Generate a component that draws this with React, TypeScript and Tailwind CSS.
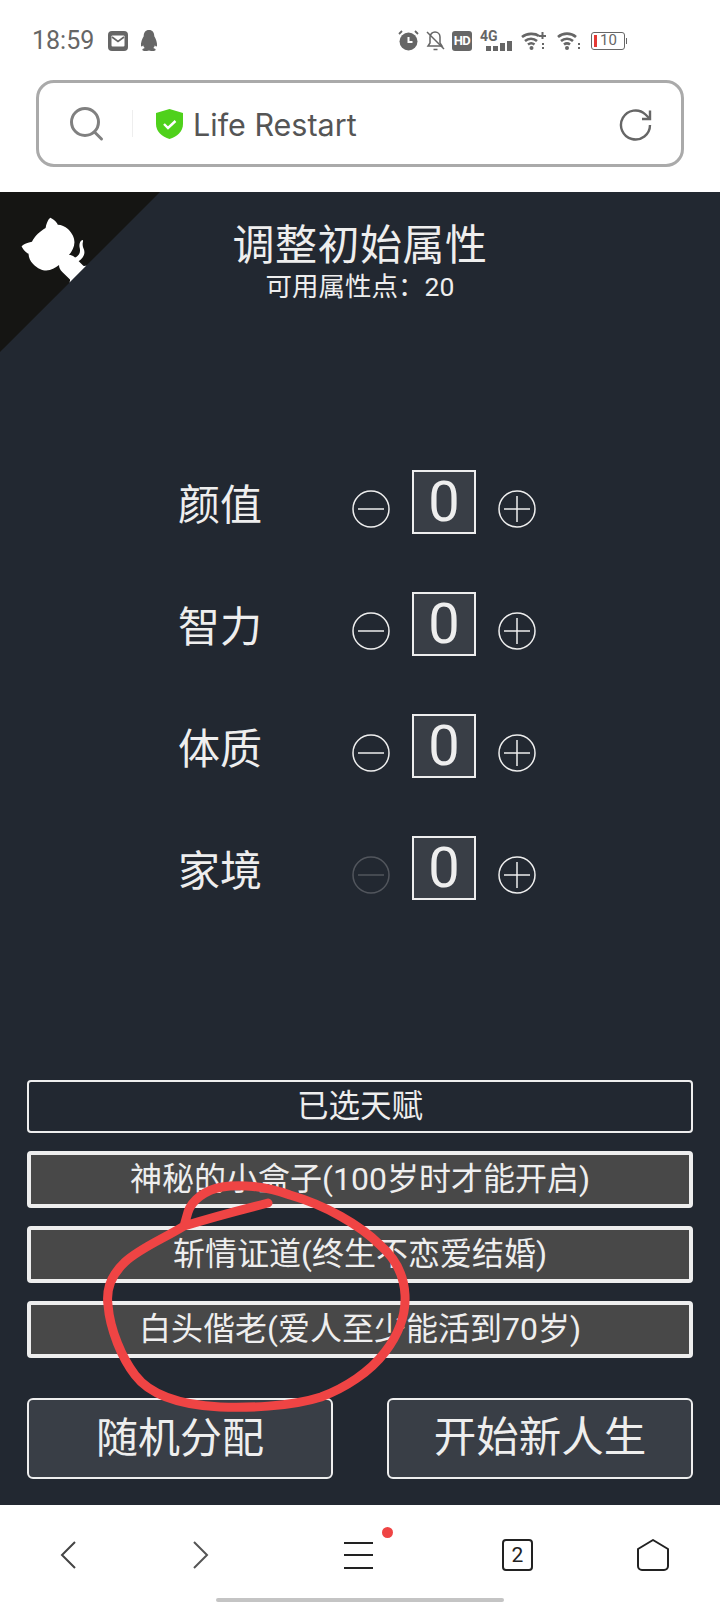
const CJK = '[font-family:Roboto,"Noto_Sans_CJK_SC",sans-serif]';

const stats = [
  { label: '颜值', canMinus: true },
  { label: '智力', canMinus: true },
  { label: '体质', canMinus: true },
  { label: '家境', canMinus: false },
];

const talents = ['神秘的小盒子(100岁时才能开启)', '斩情证道(终生不恋爱结婚)', '白头偕老(爱人至少能活到70岁)'];

function StatusBar() {
  return (
    <div className="flex h-[80px] items-start pl-[32px] pt-[27px] text-[#666]">
      <span className="w-[76px] text-[25px] leading-[28px] [font-family:Roboto,sans-serif]">18:59</span>
      {/* mail */}
      <svg width="20" height="20" viewBox="0 0 20 20" className="mt-[4px]">
        <rect width="20" height="20" rx="4" fill="#666" />
        <rect x="3.500" y="4.500" width="13" height="11" rx="1" fill="#fff" />
        <path d="M4 6l6 4.500L16 6" fill="none" stroke="#666" strokeWidth="1.600" />
      </svg>
      {/* qq */}
      <svg width="18" height="21" viewBox="0 0 18 21" className="ml-[12px] mt-[3px]" fill="#666">
        <path d="M9 0c3.600 0 5.300 2.700 5.300 6.200 1.400 2.500 3.200 6.500 2.700 9.800-.5 1-1.500.2-2.100-.8-.2 1.100-.8 2.100-1.600 2.800 1.400.5 2.600 1.100 2.400 2-.2 1-3 1-4.500 1-1 0-1.700-.4-2.200-.4s-1.200.4-2.200.4c-1.500 0-4.300 0-4.500-1-.2-.9 1-1.500 2.400-2-.8-.7-1.400-1.700-1.600-2.800-.6 1-1.600 1.800-2.100.8-.5-3.300 1.300-7.300 2.700-9.800C3.700 2.700 5.400 0 9 0z" />
      </svg>
      <div className="ml-auto mr-[93px] mt-[3px] flex items-center">
        {/* alarm */}
        <svg width="21" height="21" viewBox="0 0 21 21">
          <circle cx="10.500" cy="11.500" r="9" fill="#666" />
          <path d="M10.500 7v5h4" fill="none" stroke="#fff" strokeWidth="2" />
          <path d="M1 4l3-3M20 4l-3-3" stroke="#666" strokeWidth="1.800" />
        </svg>
        {/* bell off */}
        <svg width="19" height="20" viewBox="0 0 19 20" fill="none" stroke="#666" strokeWidth="1.500" className="ml-[7px]">
          <path d="M4 6c0-3 2.500-5 5-5 3 0 5 2.300 5 5v6l2 3H2l2-3z" />
          <path d="M1 1l17 17M7.500 18.500h4" />
        </svg>
        {/* hd */}
        <div className="ml-[7px] flex h-[20px] w-[20px] items-center justify-center rounded-[3px] bg-[#666] text-[13px] font-bold leading-none tracking-[-0.5px] text-white [font-family:Roboto,sans-serif]">
          HD
        </div>
        {/* 4g signal */}
        <div className="relative ml-[8px] h-[20px] w-[32px]">
          <span className="absolute left-0 top-[-2px] text-[14px] font-bold leading-[14px] [font-family:Roboto,sans-serif]">4G</span>
          <div className="absolute bottom-0 right-0 flex items-end gap-[2px]">
            <div className="h-[5px] w-[5px] bg-[#666]" />
            <div className="h-[5px] w-[5px] bg-[#666]" />
            <div className="h-[8px] w-[5px] bg-[#666]" />
            <div className="h-[10px] w-[5px] bg-[#666]" />
          </div>
        </div>
        {/* wifi with plus */}
        <svg width="26" height="20" viewBox="0 0 26 20" fill="none" stroke="#666" strokeWidth="2.600" className="ml-[9px]">
          <path d="M1 6c5-4 13-4 17-1M4 10c3.500-3 8.500-3 12 0M7 13.500c2-1.500 4.500-1.500 6.500 0" />
          <circle cx="10.500" cy="17" r="2" fill="#666" stroke="none" />
          <path d="M18 5h7M21.500 1v7" strokeWidth="2" />
          <path d="M22 12v2M22 16v2" strokeWidth="2" />
        </svg>
        {/* wifi */}
        <svg width="24" height="20" viewBox="0 0 24 20" fill="none" stroke="#666" strokeWidth="2.600" className="ml-[10px]">
          <path d="M1 6c5-4.500 13-4.500 18 0M4 10c3.500-3 8.500-3 12 0M7 13.500c2-1.500 4-1.500 6 0" />
          <circle cx="10" cy="17" r="2" fill="#666" stroke="none" />
          <path d="M22 12v2M22 16v2" strokeWidth="2" />
        </svg>
        {/* battery */}
        <div className="ml-[10px] flex items-center">
          <div className="flex h-[18px] w-[34px] items-center rounded-[3px] border border-[#666] pl-[2px]">
            <div className="h-[12px] w-[3px] bg-[#e53935]" />
            <span className="ml-[3px] text-[15px] leading-none [font-family:Roboto,sans-serif]">10</span>
          </div>
          <div className="ml-[1px] h-[6px] w-[1px] bg-[#666]" />
        </div>
      </div>
    </div>
  );
}

function AddressBar() {
  return (
    <div className="mx-[36px] flex h-[87px] items-center rounded-[18px] border-[3px] border-[#aaa] bg-white">
      <svg width="36" height="36" viewBox="0 0 36 36" fill="none" stroke="#808080" strokeWidth="3" className="ml-[30px]">
        <circle cx="16" cy="16" r="13.500" />
        <path d="M25.500 26l7 7" strokeLinecap="round" />
      </svg>
      <div className="ml-[27px] h-[27px] w-px bg-[#eee]" />
      <svg width="27" height="30" viewBox="0 0 27 30" className="ml-[23px]">
        <path d="M13.500 0l13.500 4v11c0 8-6 12.500-13.500 15C6 27.500 0 23 0 15V4z" fill="#4fd11b" />
        <path d="M8 15l4 4 7.500-7" fill="none" stroke="#fff" strokeWidth="2.400" />
      </svg>
      <span className="ml-[10px] mt-[3px] text-[30.500px] leading-none text-[#555] [font-family:Inter,sans-serif]">Life Restart</span>
      <svg width="34" height="34" viewBox="0 0 34 34" fill="none" stroke="#666" strokeWidth="2.400" className="ml-auto mr-[28px] mt-[2px]">
        <path d="M31 17a14.500 14.500 0 1 1-4.500-10.500L31 11" />
        <path d="M31 2.500V11h-8" />
      </svg>
    </div>
  );
}

function GithubCorner() {
  return (
    <svg width="160" height="160" viewBox="0 0 250 250" className="absolute left-0 top-0 -scale-x-100 text-white" fill="#151513">
      <path d="M0,0 L115,115 L130,115 L142,142 L250,250 L250,0 Z" />
      <path
        d="M128.3,109.0 C113.8,99.7 119.0,89.6 119.0,89.6 C122.0,82.7 120.5,78.6 120.5,78.6 C119.2,72.0 123.4,76.3 123.4,76.3 C127.3,80.9 125.5,87.3 125.5,87.3 C122.9,97.6 130.6,101.9 134.4,103.2"
        fill="currentColor"
      />
      <path
        d="M115.0,115.0 C114.9,115.1 118.7,116.5 119.8,115.4 L133.7,101.6 C136.9,99.2 139.9,98.4 142.2,98.6 C133.8,88.0 127.5,74.4 143.8,58.0 C148.5,53.4 154.0,51.2 159.7,51.0 C160.3,49.4 163.2,43.6 171.4,40.1 C171.4,40.1 176.1,42.5 178.8,56.2 C183.1,58.6 187.2,61.8 190.9,65.4 C194.5,69.0 197.7,73.2 200.1,77.6 C213.8,80.2 216.3,84.9 216.3,84.9 C212.7,93.1 206.9,96.0 205.4,96.6 C205.1,102.4 203.0,107.8 198.3,112.5 C181.9,128.9 168.3,122.5 157.7,114.1 C157.9,116.9 156.7,120.9 152.7,124.9 L141.0,136.5 C139.8,137.7 141.6,141.9 141.8,141.8 Z"
        fill="currentColor"
      />
    </svg>
  );
}

function RoundButton({ plus, dim }: { plus?: boolean; dim?: boolean }) {
  return (
    <svg width="38" height="38" viewBox="0 0 38 38" fill="none" stroke={dim ? '#52565d' : '#eeeeee'} strokeWidth="1.500" className="mt-[14px] shrink-0">
      <circle cx="19" cy="19" r="18" />
      <path d="M6 19h26" />
      {plus && <path d="M19 6v26" />}
    </svg>
  );
}

function BottomNav() {
  return (
    <div className="relative h-[100px] bg-white">
      <div className="flex items-center pl-[60px] pt-[34px]">
        <svg width="16" height="30" viewBox="0 0 16 30" fill="none" stroke="#444" strokeWidth="2">
          <path d="M15 2L2 15l13 13" />
        </svg>
        <svg width="16" height="30" viewBox="0 0 16 30" fill="none" stroke="#555" strokeWidth="2" className="ml-[117px]">
          <path d="M1 2l13 13L1 28" />
        </svg>
        <div className="relative ml-[135px] flex h-[27px] w-[29px] flex-col justify-between">
          <div className="h-[2px] bg-[#222]" />
          <div className="h-[2px] bg-[#222]" />
          <div className="h-[2px] bg-[#222]" />
          <div className="absolute left-[38px] top-[-15px] h-[11px] w-[11px] rounded-full bg-[#ef4444]" />
        </div>
        <div className="ml-[129px] flex h-[32px] w-[31px] items-center justify-center rounded-[4px] border-2 border-[#222] text-[21px] leading-none text-[#222] [font-family:Roboto,sans-serif]">
          2
        </div>
        <svg width="32" height="32" viewBox="0 0 32 32" fill="none" stroke="#222" strokeWidth="2" className="ml-[104px]">
          <path d="M16 1L31 10v17a4 4 0 0 1-4 4H5a4 4 0 0 1-4-4V10z" strokeLinejoin="round" />
        </svg>
      </div>
      <div className="absolute bottom-[3px] left-[216px] h-[4px] w-[288px] rounded-full bg-[#c4c4c4]" />
    </div>
  );
}

export default function App() {
  return (
    <div className={`relative flex h-[1605px] w-[720px] flex-col overflow-hidden bg-white ${CJK}`}>
      <StatusBar />
      <AddressBar />

      <div className="relative mt-[25px] flex h-[1313px] flex-col bg-[#222831] text-[#eeeeee]">
        <GithubCorner />

        {/* Header */}
        <div className="pt-[29px] text-center">
          <h1 className="text-[42px] leading-[50px] tracking-[0.5px]">调整初始属性</h1>
          <p className="text-[26.500px] leading-[30px] pt-[1px]">可用属性点：20</p>
        </div>

        {/* Stats */}
        <div className="mt-[168px] flex flex-col gap-[58px] pl-[178px]">
          {stats.map((stat) => (
            <div key={stat.label} className="flex h-[64px] items-center">
              <span className="mt-[8px] w-[174px] text-[42px] leading-none">{stat.label}</span>
              <RoundButton dim={!stat.canMinus} />
              <div className="mx-[22px] flex h-[64px] w-[64px] items-center justify-center border-2 border-[#eeeeee] bg-[#393e46] text-[56px] leading-none">
                0
              </div>
              <RoundButton plus />
            </div>
          ))}
        </div>

        {/* Talents */}
        <div className="mx-[27px] mt-[180px] flex flex-col gap-[17.500px]">
          <div className="flex h-[53px] items-center justify-center rounded-[4px] border-2 border-[#eeeeee] text-[31.500px] leading-none">
            已选天赋
          </div>
          {talents.map((talent) => (
            <div key={talent} className="flex h-[57.500px] items-center justify-center rounded-[4px] border-4 border-[#eeeeee] bg-[#484848] text-[32px] leading-none">
              {talent}
            </div>
          ))}
        </div>

        {/* Actions */}
        <div className="mx-[27px] mt-[40px] flex justify-between">
          <div className="flex h-[81px] w-[306px] items-center justify-center rounded-[6px] border-2 border-[#eeeeee] bg-[#393e46] text-[42px] leading-none">
            随机分配
          </div>
          <div className="flex h-[81px] w-[306px] items-center justify-center rounded-[6px] border-2 border-[#eeeeee] bg-[#393e46] text-[42.500px] leading-none">
            开始新人生
          </div>
        </div>
      </div>

      <BottomNav />

      {/* red marker scribble drawn over the screenshot */}
      <svg width="720" height="1605" viewBox="0 0 720 1605" fill="none" className="pointer-events-none absolute left-0 top-0">
        <path
          d="M268 1203C240 1210 210 1218 184 1226C165 1238 140 1248 125 1262C110 1276 106 1290 108 1305C110 1330 122 1358 135 1375C150 1395 180 1405 220 1407C245 1408 290 1407 321 1397C345 1388 370 1372 385 1352C398 1335 406 1315 405 1295C404 1275 395 1258 380 1245C360 1225 325 1205 290 1195C265 1186 240 1184 222 1187C205 1190 192 1200 188 1212L184 1226"
          stroke="#ef4444"
          strokeWidth="9"
          strokeLinecap="round"
          strokeLinejoin="round"
        />
      </svg>
    </div>
  );
}
